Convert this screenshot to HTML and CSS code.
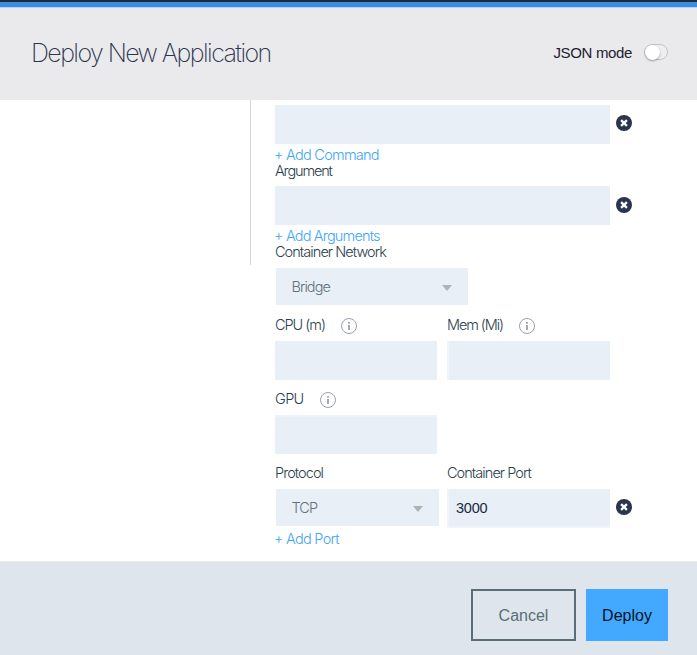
FILE: index.html
```html
<!DOCTYPE html>
<html lang="en">
<head>
<meta charset="utf-8">
<title>Deploy New Application</title>
<link rel="stylesheet" href="styles.css">
</head>
<body>
<svg class="defs" width="0" height="0" aria-hidden="true">
  <symbol id="remove" viewBox="0 0 16 16"><circle cx="8" cy="8" r="8" fill="#2b3550"/><path d="M5.1 5.1l5.8 5.8M10.9 5.1l-5.8 5.8" stroke="#fff" stroke-width="2.3"/></symbol>
  <symbol id="info" viewBox="0 0 16 16"><circle cx="8" cy="8" r="7.5" fill="none" stroke="#9c9fae"/><path d="M7.1 4.1h1.8v1.6H7.1zM7.1 7h1.8v5H7.1z" fill="#9c9fae"/></symbol>
</svg>
<div class="topbar"></div>
<header class="header">
  <h1 class="title">Deploy New Application</h1>
  <div class="mode"><span class="mode-label">JSON mode</span><span class="toggle"></span></div>
</header>
<main class="main">
  <nav class="side"></nav>
  <form class="form">
    <div class="row"><div class="input wide"></div><svg class="remove"><use href="#remove"/></svg></div>
    <a class="link">+ Add Command</a>
    <label class="label argument">Argument</label>
    <div class="row row-argument"><div class="input wide"></div><svg class="remove lower"><use href="#remove"/></svg></div>
    <a class="link arguments">+ Add Arguments</a>
    <label class="label">Container Network</label>
    <div class="select select-network"><span>Bridge</span><i class="caret"></i></div>
    <div class="fields">
      <div class="field"><label class="label"><span class="cpu">CPU (m)</span><svg class="info"><use href="#info"/></svg></label><div class="input"></div></div>
      <div class="field"><label class="label"><span class="mem">Mem (Mi)</span><svg class="info"><use href="#info"/></svg></label><div class="input edge-left"></div></div>
      <div class="field"><label class="label"><span class="gpu">GPU</span><svg class="info"><use href="#info"/></svg></label><div class="input edge-top"></div></div>
      <div class="field field-protocol"><label class="label">Protocol</label><div class="select"><span>TCP</span><i class="caret"></i></div></div>
      <div class="field"><label class="label">Container Port</label><div class="row"><div class="input port">3000</div><svg class="remove"><use href="#remove"/></svg></div></div>
    </div>
    <a class="link">+ Add Port</a>
  </form>
</main>
<footer class="footer">
  <button class="btn cancel">Cancel</button>
  <button class="btn deploy">Deploy</button>
</footer>
</body>
</html>
```
FILE: styles.css
```css
* { box-sizing: border-box; }
body {
  margin: 0;
  height: 655px;
  display: flex;
  flex-direction: column;
  overflow: hidden;
  background: #fff;
  color: #2a424d;
  font: 300 14.5px/16px Inter, "Liberation Sans", sans-serif;
  letter-spacing: -.94px;
}
.defs { position: absolute; }
.topbar { height: 8px; background: linear-gradient(#232936 0 2px, #3a8ee6 2px 7px, #b5d3f1 7px); }
.header {
  height: 92px;
  padding: 0 29px 0 31px;
  display: flex;
  align-items: center;
  justify-content: space-between;
  background: #eaeaec;
}
.title { margin: 0 0 2px; font-size: 25px; line-height: 30px; font-weight: 200; color: #2b3550; letter-spacing: -1.57px; white-space: nowrap; }
.mode { display: flex; align-items: center; gap: 12px; margin-bottom: 3px; }
.mode-label { font: 400 15px/18px "Liberation Sans", sans-serif; letter-spacing: -.35px; color: #1e2130; }
.toggle { width: 24px; height: 16px; margin-bottom: 2px; border: 1px solid #c4c4c8; border-radius: 8px; background: #efeff0; }
.toggle::before { content: ""; display: block; width: 15px; height: 15px; border-radius: 50%; background: #fff; box-shadow: 0 1px 2px rgba(0, 0, 0, .35); }
.main { height: 461px; display: flex; }
.side { width: 251px; height: 165px; border-right: 1px solid #d3d5d6; }
.form { margin: 0; padding: 5px 0 0 24px; width: 400px; }
.row { display: flex; gap: 6px; }
.input { width: 162px; height: 39px; flex: none; background: #e8eff7; }
.input.wide { width: 335px; }
.input.edge-left { width: 163px; border-left: 2px solid #eff4fa; }
.edge-top { border-top: 2px solid #eef3fa; }
.input.port { width: 163px; border: solid #eff4fa; border-width: 0 0 2px 2px; padding: 11px 7px; font: 400 14.5px/16px "Liberation Sans", sans-serif; letter-spacing: -.2px; color: #20283a; }
.remove { width: 16px; height: 16px; margin-top: 10px; flex: none; }
.remove.lower { margin-top: 11px; }
.link, .label { display: flex; align-items: center; height: 16px; white-space: nowrap; }
.link { margin-top: 3px; margin-left: -1px; color: #42a6fa; letter-spacing: -.74px; }
.link.arguments { letter-spacing: -.82px; }
.label.argument { letter-spacing: -1.15px; }
.row-argument { margin-top: 7px; }
.select { width: 163px; height: 37px; margin-left: 1px; padding: 0 16px 0 15.5px; display: flex; align-items: center; justify-content: space-between; background: #e8eff7; color: #63717c; }
.select-network { width: 192px; margin-top: 8px; }
.caret { border: solid transparent; border-width: 6px 5px 0; border-top-color: #b1b2b3; margin-top: 2px; }
.fields { display: grid; grid-template-columns: 162px 163px; column-gap: 10px; row-gap: 11px; margin-top: 12px; }
.field .label { margin-bottom: 8px; }
.field-protocol { grid-column: 1; }
.cpu { letter-spacing: -1.03px; }
.mem { letter-spacing: -1.1px; }
.gpu { letter-spacing: -.65px; }
.info { width: 16px; height: 16px; margin: 2px 0 0 16px; flex: none; }
.footer { flex: 1; border-top: 1px solid #e9edf0; padding: 27px 29px 14px 0; display: flex; justify-content: flex-end; gap: 10px; background: #dee5ec; }
.btn { height: 52px; padding: 2px 0 0; border: 0; font: 400 16px/18px "Liberation Sans", sans-serif; }
.cancel { width: 105px; border: 2px solid #5b6d78; background: none; color: #5b6d78; }
.deploy { width: 82px; background: #42a9ff; color: #06121f; }
```
